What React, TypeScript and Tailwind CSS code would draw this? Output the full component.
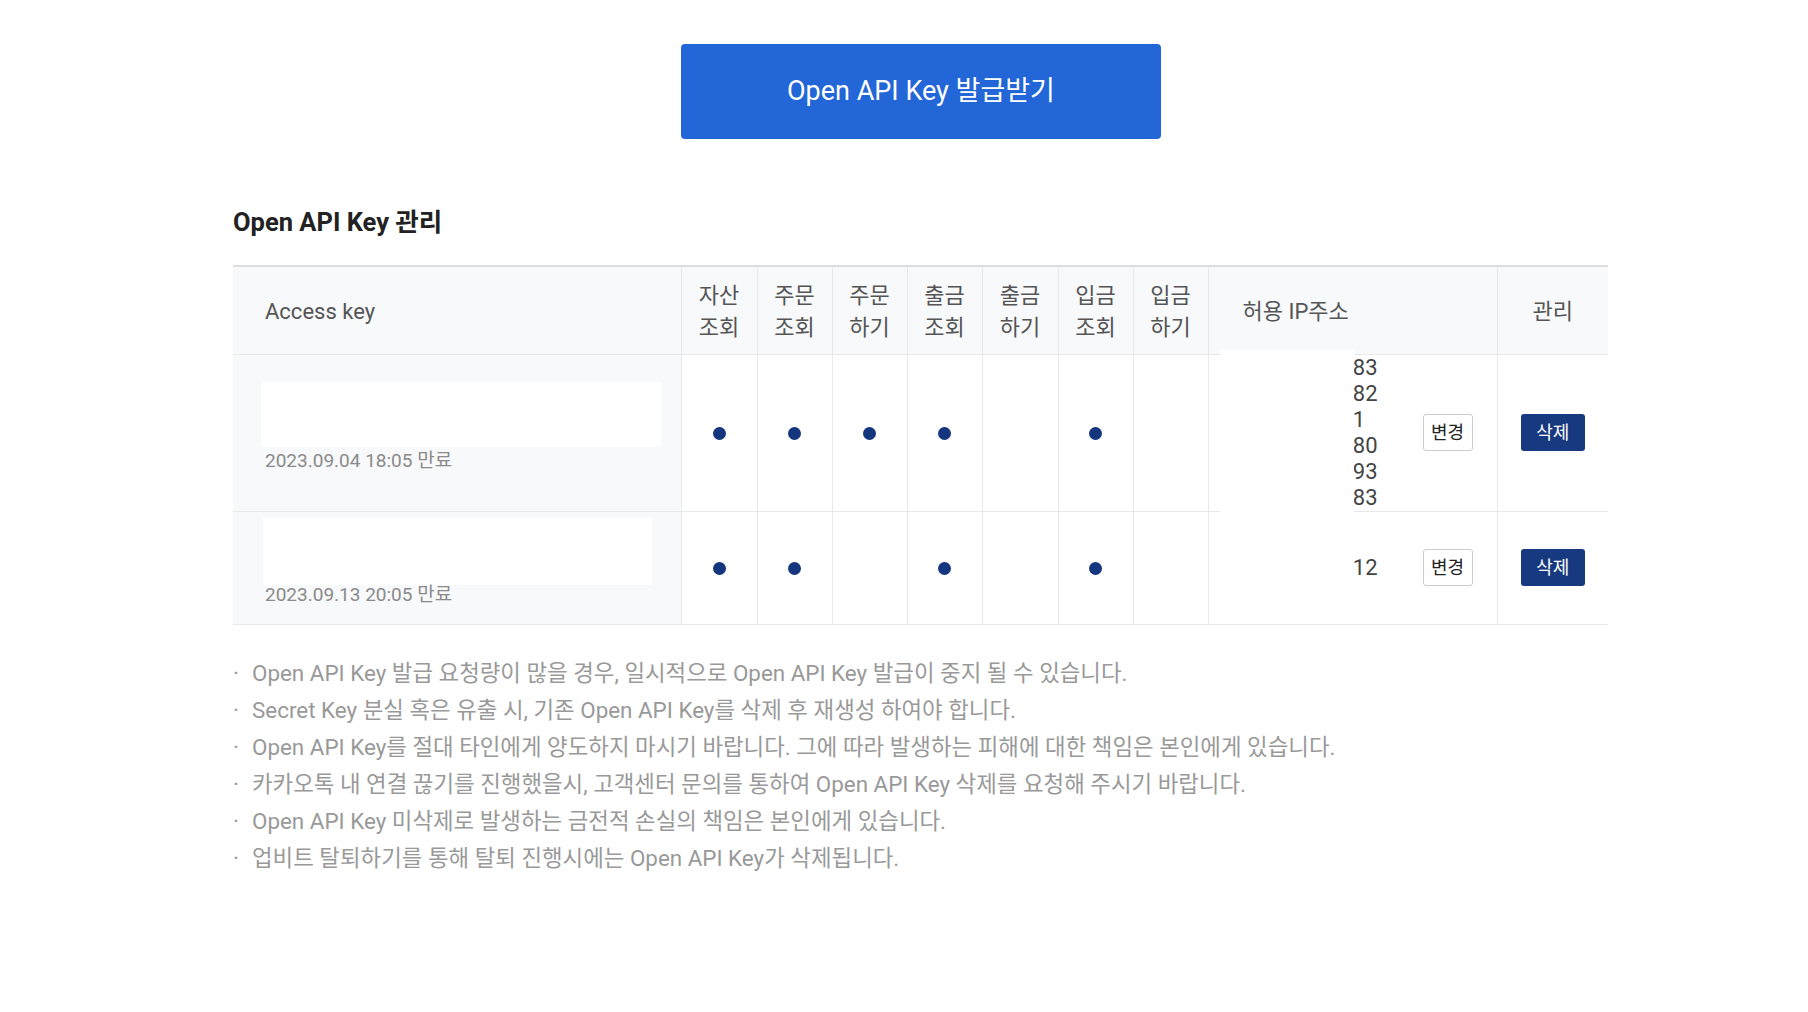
const FONT = { fontFamily: 'Roboto, "Noto Sans CJK KR", "Noto Sans", sans-serif' };

const PERMS = [
  ['자산', '조회'],
  ['주문', '조회'],
  ['주문', '하기'],
  ['출금', '조회'],
  ['출금', '하기'],
  ['입금', '조회'],
  ['입금', '하기'],
];

const NOTES = [
  'Open API Key 발급 요청량이 많을 경우, 일시적으로 Open API Key 발급이 중지 될 수 있습니다.',
  'Secret Key 분실 혹은 유출 시, 기존 Open API Key를 삭제 후 재생성 하여야 합니다.',
  'Open API Key를 절대 타인에게 양도하지 마시기 바랍니다. 그에 따라 발생하는 피해에 대한 책임은 본인에게 있습니다.',
  '카카오톡 내 연결 끊기를 진행했을시, 고객센터 문의를 통하여 Open API Key 삭제를 요청해 주시기 바랍니다.',
  'Open API Key 미삭제로 발생하는 금전적 손실의 책임은 본인에게 있습니다.',
  '업비트 탈퇴하기를 통해 탈퇴 진행시에는 Open API Key가 삭제됩니다.',
];

type Row = {
  expires: string;
  perms: boolean[];
  ips: string[];
  keyBox: string;
  cellPad: string;
  dateGap: string;
};

// ip tails: the start of each address sits under the white mask
const ROWS: Row[] = [
  {
    expires: '2023.09.04 18:05 만료',
    perms: [true, true, true, true, false, true, false],
    ips: ['83', '82', '.1', '80', '93', '83'],
    keyBox: 'ml-[28px] w-[400px] h-[65px]',
    cellPad: 'h-[157px] pt-[27px]',
    dateGap: 'mt-[3px]',
  },
  {
    expires: '2023.09.13 20:05 만료',
    perms: [true, true, false, true, false, true, false],
    ips: ['12'],
    keyBox: 'ml-[30px] w-[389px] h-[67px]',
    cellPad: 'h-[113px] pt-[6px]',
    dateGap: 'mt-[-1px]',
  },
];

function Dot() {
  return <span className="inline-block w-[13px] h-[13px] rounded-full bg-[#14367f] translate-y-[2px]" />;
}

export default function App() {
  return (
    <div className="min-h-screen bg-white" style={FONT}>
      <div className="w-[1375px] ml-[233px] pt-[44px]">
        <div className="flex justify-center">
          <button className="w-[480px] h-[95px] rounded-[4px] bg-[#2366d8] text-white text-[27px] pl-[1px]">
            Open API Key 발급받기
          </button>
        </div>

        <h2 className="mt-[66px] text-[25.5px] leading-[34px] font-bold text-[#222]">
          Open API Key 관리
        </h2>

        <table className="mt-[26px] w-full table-fixed border-collapse border-t-2 border-[#dddddd]">
          <colgroup>
            <col className="w-[448px]" />
            <col className="w-[76px]" />
            <col className="w-[75px]" />
            <col className="w-[75px]" />
            <col className="w-[75px]" />
            <col className="w-[76px]" />
            <col className="w-[75px]" />
            <col className="w-[75px]" />
            <col className="w-[289px]" />
            <col className="w-[111px]" />
          </colgroup>
          <thead>
            <tr className="bg-[#f8f9fb] text-[22px] text-[#555] font-normal">
              <th className="h-[88px] pt-[2px] text-left font-normal pl-[32px] border-b border-[#e8e8e8]">Access key</th>
              {PERMS.map((p, i) => (
                <th key={i} className="pt-[4px] font-normal leading-[32px] border-b border-l border-[#e8e8e8]">
                  {p[0]}
                  <br />
                  {p[1]}
                </th>
              ))}
              <th className="pt-[2px] text-left font-normal pl-[34px] border-b border-l border-[#e8e8e8]">허용 IP주소</th>
              <th className="pt-[2px] font-normal border-b border-l border-[#e8e8e8]">관리</th>
            </tr>
          </thead>
          <tbody>
            {ROWS.map((r, ri) => (
              <tr key={ri}>
                <td className={`align-top bg-[#f8f9fb] border-b border-[#e8e8e8] ${r.cellPad}`}>
                  <div className={`bg-white ${r.keyBox}`} />
                  <div className={`ml-[32px] text-[19px] leading-[22px] text-[#8a8a8a] ${r.dateGap}`}>{r.expires}</div>
                </td>
                {r.perms.map((on, i) => (
                  <td key={i} className="text-center align-middle border-b border-l border-[#e8e8e8]">
                    {on && <Dot />}
                  </td>
                ))}
                <td className="relative border-b border-l border-[#e8e8e8]">
                  <div className="flex items-center justify-end gap-[45px] pr-[24px]">
                    <div className="text-right text-[22px] leading-[26px] text-[#444]">
                      {r.ips.map((ip, i) => (
                        <div key={i}>
                          {ip}
                          {ip.length < 2 || ip.startsWith('.') ? <span className="invisible">0</span> : null}
                        </div>
                      ))}
                    </div>
                    <button className="w-[50px] h-[37px] rounded-[3px] border border-[#cccccc] bg-white text-[18px] text-[#222]">
                      변경
                    </button>
                  </div>
                  {ri === 0 && (
                    <div className="absolute left-[11px] w-[134px] top-[-5px] bottom-[-1px] bg-white" />
                  )}
                </td>
                <td className="text-center border-b border-l border-[#e8e8e8]">
                  <button className="w-[64px] h-[37px] rounded-[3px] bg-[#17397f] text-white text-[18px]">
                    삭제
                  </button>
                </td>
              </tr>
            ))}
          </tbody>
        </table>

        <ul className="mt-[30px] text-[22.4px] leading-[37px] text-[#999999]">
          {NOTES.map((n, i) => (
            <li key={i} className="flex">
              <span className="w-[19px] shrink-0">·</span>
              <span>{n}</span>
            </li>
          ))}
        </ul>
      </div>
    </div>
  );
}
